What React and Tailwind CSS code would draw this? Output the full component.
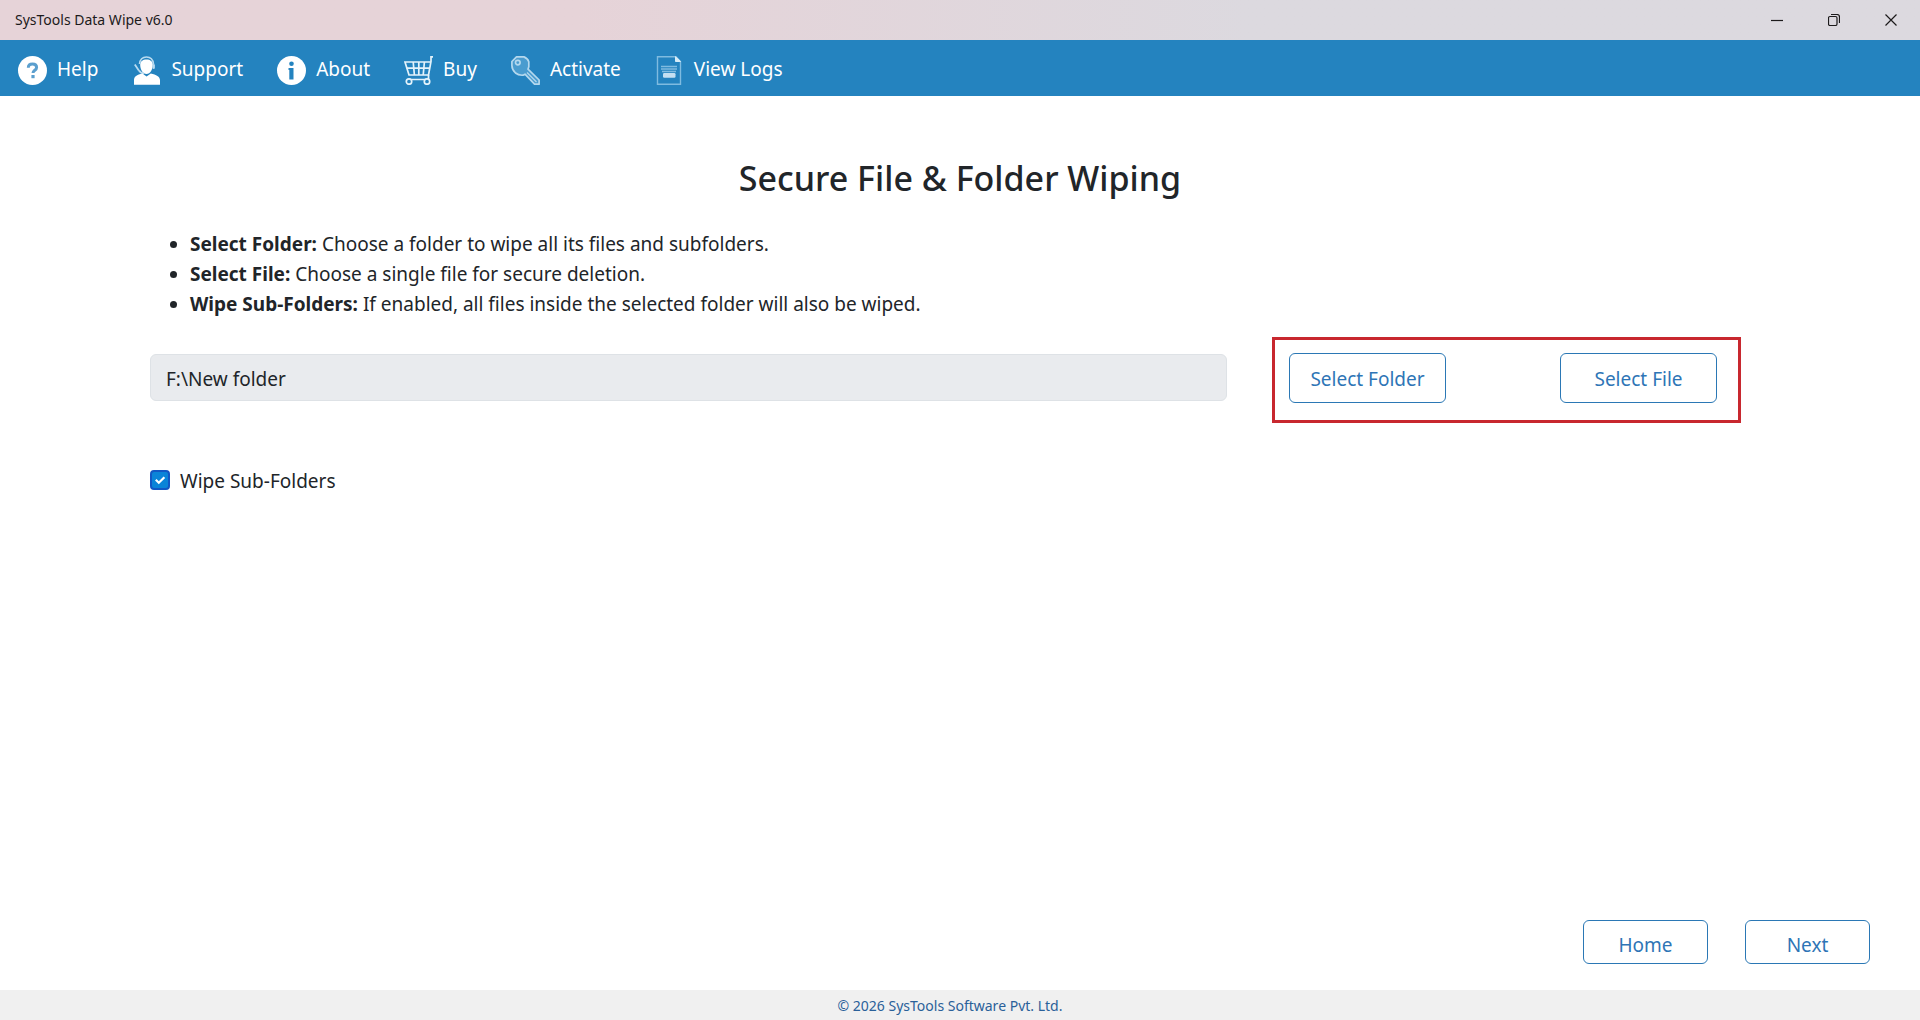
import { useState } from 'react'

// ── Icons ───────────────────────────────────────────────────

function HelpIcon() {
  return (
    <svg viewBox="0 0 29 29" className="size-full" fill="none">
      <circle cx="14.5" cy="14.5" r="14.5" fill="#fff" />
      <path
        d="M10.3 11.8c0-2.4 1.7-3.9 4.2-3.9s4.1 1.4 4.1 3.5c0 2.8-3.6 2.9-3.6 5.6"
        stroke="#5b9fce"
        strokeWidth="3"
      />
      <rect x="13.4" y="19" width="3.2" height="3.2" fill="#5b9fce" />
    </svg>
  )
}

function SupportIcon() {
  return (
    <svg viewBox="0 0 29 29" className="size-full" fill="none">
      <path d="M8.2 8.5c0-3 2.6-5 6.3-5s6.3 2 6.3 5c0 4.5-2.3 9.500-6.3 9.500s-6.3-5-6.3-9.500z" fill="#fff" />
      <path d="M7.500 8C8 3.500 10.500 1 14.5 1s6.500 2.500 7 7" stroke="#b9dbf0" strokeWidth="1.6" />
      <path d="M2.800 8.5l4 6M7 14.5c1 1.8 2.5 2.6 5 2.8" stroke="#b9dbf0" strokeWidth="1.8" />
      <rect x="20.5" y="8" width="2.400" height="5" rx="1.2" fill="#b9dbf0" />
      <path d="M2 28.8V24c0-3.4 2.800-5.400 8.400-6.600l4.2 3 4.2-3C24.200 18.600 28 20.600 28 24v4.8z" fill="#fff" />
    </svg>
  )
}

function AboutIcon() {
  return (
    <svg viewBox="0 0 29 29" className="size-full" fill="none">
      <circle cx="14.5" cy="14.5" r="14.5" fill="#fff" />
      <circle cx="14.5" cy="7.8" r="2.3" fill="#2483bf" />
      <path d="M11.5 12h5v11.5h-4.2V14h-.8z" fill="#2483bf" />
    </svg>
  )
}

function CartIcon() {
  return (
    <svg viewBox="0 0 29 29" className="size-full" fill="none" stroke="#e4f3fb" strokeWidth="1.7">
      <path d="M29 .8h-2v4.500l-2.500 13.700H5L1 6h26" />
      <path d="M2.800 12.200h22.700M9.200 6l1.200 13M14.8 6v13M20.400 6l-1.200 13" />
      <path d="M24.500 19v4.500H5.300" />
      <circle cx="5" cy="25.500" r="2.700" fill="#2483bf" />
      <circle cx="23" cy="25.500" r="2.700" fill="#2483bf" />
    </svg>
  )
}

function KeyIcon() {
  return (
    <svg viewBox="0 0 29 29" className="size-full" fill="none" stroke="#b4d8ee" strokeWidth="1.7">
      <path
        d="M5.500.9h7.500c2.500 1 4 2.500 4.800 4.800v5l-.8 2.500L28.100 24v4.200h-4.600L14 18.200l-2 1c-3 .2-5.500-.5-7.500-2.200C2 14.500.9 12.500.9 9.500V5.500z"
        fill="#4a9ccf"
        strokeLinejoin="round"
      />
      <circle cx="6.800" cy="6.600" r="2.300" />
      <path d="M16 16.500l9.500 9.500" strokeWidth="1.2" />
    </svg>
  )
}

function LogsIcon() {
  return (
    <svg viewBox="0 0 29 29" className="size-full" fill="none" stroke="#7fbbe0">
      <path d="M2.5.7h18.500l4.500 4.800v22.800h-23z" strokeWidth="1.4" />
      <path d="M20.500.7v4.800h5z" fill="#d6ecf8" stroke="#d6ecf8" />
      <path d="M6 10.500h16M6 13h16M7 15.500h14" strokeWidth="1.6" />
      <rect x="8" y="17" width="12.500" height="4.800" rx="1.2" fill="#c3dff2" stroke="none" />
    </svg>
  )
}

// Toolbar entries, left to right
const MENU_ITEMS = [
  { label: 'Help', Icon: HelpIcon },
  { label: 'Support', Icon: SupportIcon },
  { label: 'About', Icon: AboutIcon },
  { label: 'Buy', Icon: CartIcon },
  { label: 'Activate', Icon: KeyIcon },
  { label: 'View Logs', Icon: LogsIcon },
]

const HINTS = [
  { term: 'Select Folder:', text: 'Choose a folder to wipe all its files and subfolders.' },
  { term: 'Select File:', text: 'Choose a single file for secure deletion.' },
  { term: 'Wipe Sub-Folders:', text: 'If enabled, all files inside the selected folder will also be wiped.' },
]

const WINDOW_BUTTONS = [
  { label: 'Minimize', path: 'M0 6.5h12' },
  { label: 'Restore', path: 'M.5 4a1.5 1.5 0 0 1 1.5-1.5h5.5a1.5 1.5 0 0 1 1.5 1.5v6a1.5 1.5 0 0 1-1.5 1.5h-5.5a1.5 1.5 0 0 1-1.5-1.5zM3 .5h6a2.5 2.5 0 0 1 2.5 2.5v6' },
  { label: 'Close', path: 'M.5.5l11 11M11.5.5l-11 11' },
]

function OutlineButton({ className, children }) {
  return (
    <button
      type="button"
      className={`rounded-md border border-[#2b78b5] bg-white text-[#2e75b6] hover:bg-[#2483bf] hover:text-white ${className}`}
    >
      {children}
    </button>
  )
}

function TitleBar() {
  return (
    <header className="flex h-10 shrink-0 items-center justify-between bg-linear-to-r from-[#e6d3d8] from-30% to-[#dcd9df] to-65% pl-[15px]">
      <span className="text-sm text-[#1c1a1b]">SysTools Data Wipe v6.0</span>
      <div className="flex h-full pr-px">
        {WINDOW_BUTTONS.map(({ label, path }) => (
          <button
            key={label}
            type="button"
            aria-label={label}
            className="flex h-full w-[57px] items-center justify-center pb-px hover:bg-black/10"
          >
            <svg viewBox="0 0 12 12" className="size-3" fill="none" stroke="#1c1a1b" strokeWidth="1.2">
              <path d={path} />
            </svg>
          </button>
        ))}
      </div>
    </header>
  )
}

function App() {
  const [wipeSub, setWipeSub] = useState(true)

  return (
    <div className="flex min-h-screen flex-col bg-white font-['Noto_Sans',sans-serif] text-[19px] text-[#212529]">
      <TitleBar />

      {/* Toolbar */}
      <nav className="flex h-14 shrink-0 items-center gap-[34px] bg-[#2483bf] px-[18px] pt-[2px] text-white">
        {MENU_ITEMS.map(({ label, Icon }) => (
          <a key={label} href="#" className="flex items-center gap-[10px]">
            <span className="mt-[3px] size-[29px] shrink-0">
              <Icon />
            </span>
            {label}
          </a>
        ))}
      </nav>

      <main className="flex flex-1 flex-col pt-[59px]">
        <h1 className="text-center text-[34px] leading-[46px] font-medium">Secure File &amp; Folder Wiping</h1>

        <div className="pt-7 pr-[179px] pl-[150px]">
          <ul className="list-disc pl-10 leading-[30px]">
            {HINTS.map(({ term, text }) => (
              <li key={term}>
                <strong>{term}</strong> {text}
              </li>
            ))}
          </ul>

          {/* Path + pickers */}
          <div className="mt-[18px] flex items-start gap-[45px]">
            <input
              type="text"
              readOnly
              aria-label="Selected path"
              value="F:\New folder"
              className="mt-[17px] h-[47px] min-w-0 flex-1 rounded-md border border-[#dee2e6] bg-[#e9ebee] px-[15px] pt-[2px]"
            />
            <div className="flex h-[86px] w-[469px] shrink-0 justify-between border-3 border-[#c8282f] pt-[13px] pr-[21px] pl-[14px]">
              <OutlineButton className="h-[50px] w-[157px] pt-[2px]">Select Folder</OutlineButton>
              <OutlineButton className="h-[50px] w-[157px] pt-[2px]">Select File</OutlineButton>
            </div>
          </div>

          <label className="mt-[42px] flex w-fit items-center gap-[10px]">
            <span className="relative flex size-5">
              <input
                type="checkbox"
                checked={wipeSub}
                onChange={(e) => setWipeSub(e.target.checked)}
                className="size-5 appearance-none rounded border-2 border-[#8a8f94] checked:border-[#1257c4] checked:bg-[#0a84d8]"
              />
              {wipeSub && (
                <svg viewBox="0 0 20 20" className="pointer-events-none absolute inset-0" fill="none" stroke="#fff" strokeWidth="2.2">
                  <path d="M5.8 9.8l3 3 5.6-5.6" />
                </svg>
              )}
            </span>
            <span className="pt-[2px]">Wipe Sub-Folders</span>
          </label>
        </div>

        <div className="mt-auto flex justify-end gap-[37px] pr-[50px] pb-[26px]">
          <OutlineButton className="h-11 w-[125px] pt-[6px]">Home</OutlineButton>
          <OutlineButton className="h-11 w-[125px] pt-[6px]">Next</OutlineButton>
        </div>
      </main>

      <footer className="flex h-[30px] shrink-0 items-center justify-center bg-[#f0f0f0] pt-[2px] pr-5 text-sm text-[#2a6099]">
        © 2026 SysTools Software Pvt. Ltd.
      </footer>
    </div>
  )
}

export default App
